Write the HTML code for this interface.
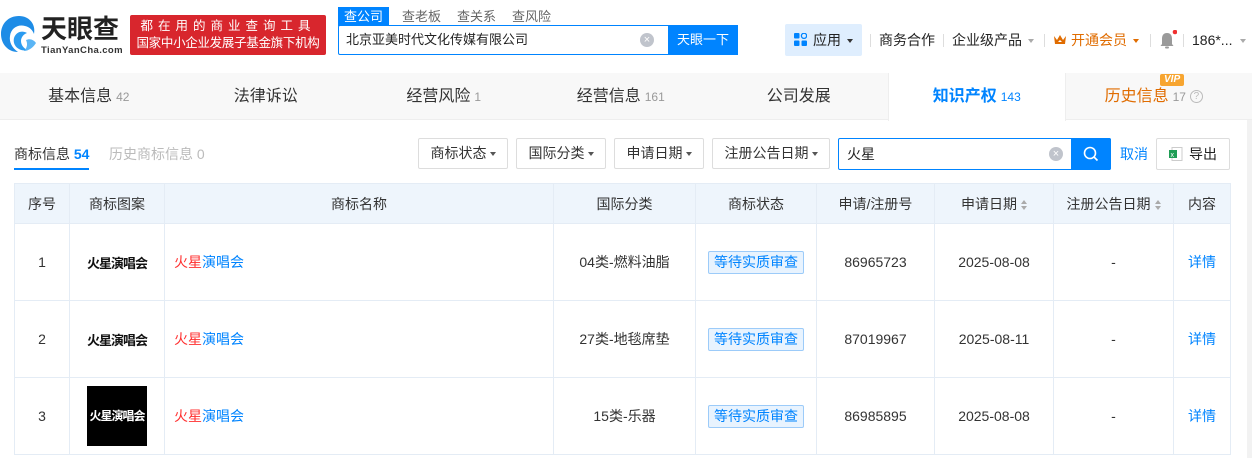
<!DOCTYPE html>
<html><head><meta charset="utf-8"><style>
*{margin:0;padding:0;box-sizing:border-box}
body{width:1252px;height:458px;overflow:hidden;background:#fff;font-family:"Liberation Sans","Noto Sans CJK SC",sans-serif;color:#333;font-size:14px;position:relative}
.abs{position:absolute}
.hdr{left:0;top:0;width:1252px;height:73px;background:#fff;box-shadow:0 1px 4px rgba(0,0,0,.06)}
.tabs{left:0;top:73px;width:1252px;height:47px;background:#f8f8f8;border-bottom:1px solid #eee}
.tab{position:absolute;top:0;height:47px;width:177.5px;text-align:center;line-height:47px;font-size:16px;color:#333}
.tab small{font-size:12px;color:#999;margin-left:4px}
.fbtn{position:absolute;top:138px;height:31px;border:1px solid #ddd;border-radius:2px;line-height:29px;font-size:14px;text-align:center;color:#333}
.car{display:inline-block;width:0;height:0;border-left:3.5px solid transparent;border-right:3.5px solid transparent;border-top:4px solid #555;vertical-align:middle;margin-left:3px}
table{position:absolute;left:14px;top:183px;border-collapse:collapse;width:1216px;table-layout:fixed}
td,th{border:1px solid #e4ecf5;text-align:center;font-size:14px;font-weight:normal;color:#333}
th{background:#eef5fc;height:40px}
td{height:77px}
.tag{display:inline-block;border:1px solid #9ccbf9;background:#e8f3fe;color:#0084ff;padding:0 5px;height:23px;line-height:21px;border-radius:2px}
.blue{color:#0084ff}
.red{color:#ff3030}
.lg{font-weight:bold;font-size:13px;color:#111;letter-spacing:-1px}
.sort{display:inline-block;vertical-align:middle;margin-left:4px;width:6px;height:10px;position:relative}
.sort:before{content:"";position:absolute;top:0;left:0;border-left:3px solid transparent;border-right:3px solid transparent;border-bottom:4px solid #aaa}
.sort:after{content:"";position:absolute;bottom:0;left:0;border-left:3px solid transparent;border-right:3px solid transparent;border-top:4px solid #aaa}
</style></head><body>
<div class="abs hdr"></div>
<svg class="abs" style="left:0;top:14px" width="38" height="40" viewBox="0 0 38 40">
<path d="M19 2 C8 2 1 10 1 20 C1 30 8 38 18 38 C12 34 9 28 10 22 C11 14 18 10 25 12 C30 13 33 17 34 20 C36 10 29 2 19 2Z" fill="#1e8ce6"/>
<path d="M14 24 C16 18 22 16 27 19 C24 20 21 23 21 27 C21 31 24 35 28 36 C21 38 12 33 14 24Z" fill="#2a9bf0"/>
<path d="M26 26 C30 24 34 26 36 29 C33 34 28 37 24 37 C27 34 28 30 26 26Z" fill="#5ab5f5"/>
</svg>
<div class="abs" style="left:41px;top:14px;font-size:26px;font-weight:bold;color:#222;letter-spacing:0px;line-height:30px">天眼查</div>
<div class="abs" style="left:41px;top:45px;font-size:9.5px;color:#333;letter-spacing:.4px;font-weight:bold">TianYanCha.com</div>
<div class="abs" style="left:130px;top:15px;width:196px;height:40px;background:#d8262d;border-radius:2px;color:#fff;font-size:12.5px;line-height:17px;text-align:center;padding-top:3px;white-space:nowrap;overflow:hidden">
<div style="letter-spacing:5px">都在用的商业查询工具</div><div style="letter-spacing:-.3px">国家中小企业发展子基金旗下机构</div></div>
<div class="abs" style="left:338px;top:7px;width:51px;height:19px;background:#0084ff;color:#fff;font-size:13px;text-align:center;line-height:19px">查公司</div>
<div class="abs" style="left:402px;top:7px;font-size:13px;line-height:19px;color:#666">查老板</div>
<div class="abs" style="left:457px;top:7px;font-size:13px;line-height:19px;color:#666">查关系</div>
<div class="abs" style="left:512px;top:7px;font-size:13px;line-height:19px;color:#666">查风险</div>
<div class="abs" style="left:338px;top:25px;width:400px;height:30px;border:1px solid #0084ff;border-radius:2px"></div>
<div class="abs" style="left:346px;top:25px;line-height:30px;font-size:13px;color:#222">北京亚美时代文化传媒有限公司</div>
<div class="abs" style="left:640px;top:33px;width:14px;height:14px;border-radius:50%;background:#c0c4cc;color:#fff;font-size:11px;line-height:14px;text-align:center">×</div>
<div class="abs" style="left:668px;top:25px;width:70px;height:30px;background:#0084ff;color:#fff;font-size:13px;line-height:30px;text-align:center">天眼一下</div>
<div class="abs" style="left:785px;top:24px;width:77px;height:32px;background:#dfeefe;border-radius:2px"></div>
<svg class="abs" style="left:794px;top:33px" width="13" height="13"><rect x="0" y="0" width="5.5" height="5.5" rx="1" fill="#0084ff"/><circle cx="10" cy="2.8" r="2.6" fill="none" stroke="#0084ff" stroke-width="1.3"/><rect x="0" y="7.5" width="5.5" height="5.5" rx="1" fill="#0084ff"/><rect x="7.5" y="7.5" width="5.5" height="5.5" rx="1" fill="#0084ff"/></svg>
<div class="abs" style="left:813px;top:24px;line-height:32px;font-size:14px;color:#222">应用<span class="car" style="margin-left:6px;border-top-color:#333"></span></div>
<div class="abs" style="left:870px;top:34px;width:1px;height:13px;background:#ddd"></div>
<div class="abs" style="left:879px;top:24px;line-height:32px;font-size:14px;color:#222">商务合作</div>
<div class="abs" style="left:943px;top:34px;width:1px;height:13px;background:#ddd"></div>
<div class="abs" style="left:952px;top:24px;line-height:32px;font-size:14px;color:#222">企业级产品<span class="car" style="margin-left:6px;border-top-color:#aaa"></span></div>
<div class="abs" style="left:1044px;top:34px;width:1px;height:13px;background:#ddd"></div>
<svg class="abs" style="left:1053px;top:34px" width="14" height="12"><path d="M1 2 L4 6 L7 1 L10 6 L13 2 L12 10 L2 10Z" fill="#e06c00"/><path d="M5 8 L7 6 L9 8Z" fill="#fff"/></svg>
<div class="abs" style="left:1071px;top:24px;line-height:32px;font-size:14px;color:#e06c00">开通会员<span class="car" style="margin-left:6px;border-top-color:#e06c00"></span></div>
<div class="abs" style="left:1150px;top:34px;width:1px;height:13px;background:#ddd"></div>
<svg class="abs" style="left:1159px;top:30px" width="18" height="20"><path d="M8 3 C4 3 3 6 3 9 L3 14 L1.5 16 L14.5 16 L13 14 L13 9 C13 6 12 3 8 3Z" fill="#9a9a9a"/><rect x="6" y="16.5" width="4" height="2" rx="1" fill="#9a9a9a"/><circle cx="16" cy="2" r="2.3" fill="#f03030"/></svg>
<div class="abs" style="left:1183px;top:34px;width:1px;height:13px;background:#ddd"></div>
<div class="abs" style="left:1192px;top:24px;line-height:32px;font-size:14px;color:#222">186*...<span class="car" style="margin-left:8px;border-top-color:#aaa"></span></div>
<div class="abs tabs">
<div class="tab" style="left:0">基本信息<small>42</small></div>
<div class="tab" style="left:177px">法律诉讼</div>
<div class="tab" style="left:355px">经营风险<small>1</small></div>
<div class="tab" style="left:532px">经营信息<small>161</small></div>
<div class="tab" style="left:710px">公司发展</div>
<div class="tab" style="left:888px;background:#fff;border-left:1px solid #eee;border-right:1px solid #eee;height:48px;color:#0084ff;font-weight:bold">知识产权<small style="color:#0084ff;font-weight:normal">143</small></div>
<div class="tab" style="left:1065px;color:#e06c00">历史信息<small>17</small><span style="display:inline-block;width:13px;height:13px;border:1px solid #bbb;border-radius:50%;font-size:10px;line-height:11px;color:#bbb;margin-left:4px;vertical-align:middle">?</span></div>
<div class="abs" style="left:1160px;top:1px;background:#f7a530;color:#fff;font-size:10px;font-weight:bold;font-style:italic;padding:0 4px;line-height:12px;border-radius:2px">VIP</div>
</div>
<div class="abs" style="left:14px;top:144px;font-size:14px;color:#333;line-height:20px">商标信息 <span class="blue" style="font-weight:bold">54</span></div>
<div class="abs" style="left:14px;top:168px;width:75px;height:2px;background:#0084ff"></div>
<div class="abs" style="left:109px;top:144px;font-size:14px;color:#bbb;line-height:20px">历史商标信息 0</div>
<div class="fbtn" style="left:418px;width:90px">商标状态<span class="car"></span></div>
<div class="fbtn" style="left:516px;width:90px">国际分类<span class="car"></span></div>
<div class="fbtn" style="left:614px;width:90px">申请日期<span class="car"></span></div>
<div class="fbtn" style="left:712px;width:118px">注册公告日期<span class="car"></span></div>
<div class="abs" style="left:838px;top:138px;width:273px;height:32px;border:1px solid #0084ff;border-radius:2px"></div>
<div class="abs" style="left:847px;top:138px;line-height:32px;font-size:14px;color:#222">火星</div>
<div class="abs" style="left:1049px;top:147px;width:14px;height:14px;border-radius:50%;background:#c0c4cc;color:#fff;font-size:11px;line-height:14px;text-align:center">×</div>
<div class="abs" style="left:1071px;top:138px;width:40px;height:32px;background:#0084ff;border-radius:0 2px 2px 0"></div>
<svg class="abs" style="left:1083px;top:146px" width="16" height="16"><circle cx="7" cy="7" r="5.5" fill="none" stroke="#fff" stroke-width="1.6"/><path d="M11 11 L14.5 14.5" stroke="#fff" stroke-width="1.6"/></svg>
<div class="abs blue" style="left:1120px;top:138px;line-height:32px;font-size:14px">取消</div>
<div class="abs" style="left:1156px;top:138px;width:74px;height:32px;border:1px solid #ddd;border-radius:2px"></div>
<svg class="abs" style="left:1169px;top:147px" width="14" height="14"><rect x="3" y="0.5" width="10" height="13" fill="#fff" stroke="#ccc"/><rect x="0" y="3" width="8" height="8" fill="#1f9d55"/><text x="1.5" y="10" font-size="7" fill="#fff" font-family="Liberation Sans">x</text></svg>
<div class="abs" style="left:1189px;top:138px;line-height:32px;font-size:14px;color:#222">导出</div>
<table>
<colgroup><col style="width:55px"><col style="width:95px"><col style="width:389px"><col style="width:142px"><col style="width:121px"><col style="width:118px"><col style="width:119px"><col style="width:120px"><col style="width:57px"></colgroup>
<tr><th>序号</th><th>商标图案</th><th>商标名称</th><th>国际分类</th><th>商标状态</th><th>申请/注册号</th><th>申请日期<span class="sort"></span></th><th>注册公告日期<span class="sort"></span></th><th>内容</th></tr>
<tr><td>1</td><td><span class="lg">火星演唱会</span></td><td style="text-align:left;padding-left:9px"><span class="red">火星</span><span class="blue">演唱会</span></td><td>04类-燃料油脂</td><td><span class="tag">等待实质审查</span></td><td>86965723</td><td>2025-08-08</td><td>-</td><td class="blue">详情</td></tr>
<tr><td>2</td><td><span class="lg">火星演唱会</span></td><td style="text-align:left;padding-left:9px"><span class="red">火星</span><span class="blue">演唱会</span></td><td>27类-地毯席垫</td><td><span class="tag">等待实质审查</span></td><td>87019967</td><td>2025-08-11</td><td>-</td><td class="blue">详情</td></tr>
<tr><td>3</td><td><div style="width:60px;height:60px;background:#000;margin:0 auto;color:#fff;font-size:12px;font-weight:bold;line-height:60px;letter-spacing:-1px;white-space:nowrap;overflow:hidden;text-align:center">火星演唱会</div></td><td style="text-align:left;padding-left:9px"><span class="red">火星</span><span class="blue">演唱会</span></td><td>15类-乐器</td><td><span class="tag">等待实质审查</span></td><td>86985895</td><td>2025-08-08</td><td>-</td><td class="blue">详情</td></tr>
</table>
<div class="abs" style="left:1247px;top:120px;width:5px;height:338px;background:#f2f2f2"></div>
</body></html>
